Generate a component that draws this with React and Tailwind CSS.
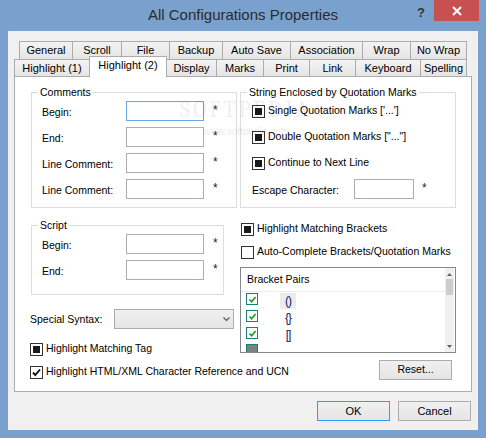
import React from 'react';

const row1 = [
  ['General', 53],
  ['Scroll', 49],
  ['File', 48],
  ['Backup', 53],
  ['Auto Save', 68],
  ['Association', 72],
  ['Wrap', 48],
  ['No Wrap', 57],
];

const row2 = [
  ['Highlight (1)', 75],
  ['Highlight (2)', 78, true],
  ['Display', 50],
  ['Marks', 47],
  ['Print', 46],
  ['Link', 46],
  ['Keyboard', 65],
  ['Spelling', 47],
];

function Tab({ label, w, last, active }) {
  if (active) {
    return (
      <div
        style={{ width: w }}
        className="relative z-10 -mr-px -mb-px h-[21px] shrink-0 border-x border-t border-[#acacac] bg-white pt-[2px] text-center leading-[12px]"
      >
        {label}
      </div>
    );
  }
  return (
    <div
      style={{ width: w }}
      className={`flex h-full shrink-0 items-center justify-center border-l border-t border-[#acacac] bg-gradient-to-b from-[#f3f3f3] to-[#e5e5e5] ${last ? 'border-r' : ''}`}
    >
      {label}
    </div>
  );
}

function Check({ state }) {
  return (
    <div className="flex h-[13px] w-[13px] shrink-0 items-center justify-center border border-[#333] bg-white">
      {state === 'mixed' && <div className="h-[7px] w-[7px] bg-[#1a1a1a]" />}
      {state === 'on' && (
        <svg width="11" height="11" viewBox="0 0 11 11">
          <path d="M2 5.5 L4.3 8 L9 2.5" fill="none" stroke="#111" strokeWidth="1.9" />
        </svg>
      )}
    </div>
  );
}

function Field({ w, focus }) {
  return (
    <div
      className={`h-[20px] shrink-0 border bg-white ${focus ? 'border-[#6aa8e8]' : 'border-[#abadb3]'}`}
      style={{ width: w }}
    />
  );
}

function Group({ title, className, children }) {
  return (
    <div className={`relative border border-[#dcdcdc] ${className}`}>
      <span className="absolute -top-[7px] left-[6px] bg-white px-[2px] leading-[12px]">{title}</span>
      {children}
    </div>
  );
}

function Star() {
  return <span className="text-[12px] leading-[12px] text-[#222]">*</span>;
}

function InputRow({ label, focus }) {
  return (
    <div className="flex h-[20px] items-center">
      <span className="w-[94px] shrink-0 whitespace-nowrap pl-[10px] pt-[3px]">{label}</span>
      <Field w={78} focus={focus} />
      <span className="ml-[9px]">
        <Star />
      </span>
    </div>
  );
}

function Button({ children, def, className }) {
  return (
    <div
      className={`flex h-[20px] w-[73px] items-center justify-center border bg-gradient-to-b from-[#f0f0f0] to-[#e5e5e5] ${def ? 'border-[#3399ff]' : 'border-[#acacac]'} ${className || ''}`}
    >
      {children}
    </div>
  );
}

function ListCheck() {
  return (
    <div className="flex h-[12px] w-[12px] items-center justify-center border border-[#17806f] bg-white">
      <svg width="9" height="9" viewBox="0 0 9 9">
        <path d="M1.5 4.5 L3.6 6.8 L7.6 2" fill="none" stroke="#1f9a2a" strokeWidth="1.7" />
      </svg>
    </div>
  );
}

export default function App() {
  return (
    <div
      className="relative h-[438px] w-[486px] overflow-hidden bg-[#7aa1cd] text-[10.5px] text-black"
      style={{ fontFamily: '"Liberation Sans", Arial, sans-serif' }}
    >
      {/* Title bar */}
      <div className="grid h-[31px] grid-cols-[1fr_auto_1fr]">
        <div />
        <div className="pt-[5px] text-[15px] leading-[20px] text-[#2b2b2b]">All Configurations Properties</div>
        <div className="flex items-start justify-end pr-[7px]">
          <span className="w-[26px] pt-[3px] text-center text-[13px] font-bold text-[#333]">?</span>
          <div className="flex h-[21px] w-[45px] items-center justify-center bg-[#c75050]">
            <svg width="10" height="10" viewBox="0 0 10 10">
              <path d="M1 1 L9 9 M9 1 L1 9" stroke="#fff" strokeWidth="2" />
            </svg>
          </div>
        </div>
      </div>

      {/* Dialog body */}
      <div className="mx-[8px] h-[399px] bg-[#f0f0f0] pt-[10px] text-[11px]">
        <div className="ml-[11px] flex h-[18px]">
          {row1.map(([l, w], i) => (
            <Tab key={l} label={l} w={w} last={i === row1.length - 1} />
          ))}
        </div>
        <div className="ml-[6px] flex h-[17px] items-end">
          {row2.map(([l, w, a], i) => (
            <Tab key={l} label={l} w={w} active={a} last={i === row2.length - 1} />
          ))}
        </div>

        {/* Tab page */}
        <div className="mx-[6px] flex h-[316px] gap-[3px] border border-[#acacac] bg-white pl-[16px] pt-[15px] text-[10.5px]">
          {/* left column */}
          <div className="flex w-[206px] flex-col">
            <Group title="Comments" className="w-[206px]">
              <div className="flex flex-col gap-[6px] py-[8px]">
                <InputRow label="Begin:" focus />
                <InputRow label="End:" />
                <InputRow label="Line Comment:" />
                <InputRow label="Line Comment:" />
              </div>
            </Group>

            <Group title="Script" className="mt-[17px] w-[193px]">
              <div className="flex flex-col gap-[6px] pb-[14px] pt-[8px]">
                <InputRow label="Begin:" />
                <InputRow label="End:" />
              </div>
            </Group>

            <div className="-ml-px mt-[14px] flex h-[20px] items-center">
              <span className="w-[84px] shrink-0 pt-[2px]">Special Syntax:</span>
              <div className="flex h-[20px] w-[120px] items-center justify-end border border-[#acacac] bg-gradient-to-b from-[#f0f0f0] to-[#e5e5e5] pr-[3px]">
                <svg width="7" height="5" viewBox="0 0 7 5">
                  <path d="M0.5 0.5 L3.5 3.5 L6.5 0.5" fill="none" stroke="#555" strokeWidth="1.2" />
                </svg>
              </div>
            </div>

            <div className="-ml-px mt-[12px] flex h-[16px] items-center gap-[3px]">
              <Check state="mixed" />
              <span>Highlight Matching Tag</span>
            </div>
            <div className="-ml-px mt-[7px] flex h-[16px] items-center gap-[3px] whitespace-nowrap">
              <Check state="on" />
              <span>Highlight HTML/XML Character Reference and UCN</span>
            </div>
          </div>

          {/* right column */}
          <div className="flex w-[216px] flex-col">
            <Group title="String Enclosed by Quotation Marks" className="w-[216px]">
              <div className="flex flex-col gap-[6px] py-[8px] pl-[11px]">
                <div className="flex h-[20px] items-center gap-[3px]">
                  <Check state="mixed" />
                  <span>Single Quotation Marks ['...']</span>
                </div>
                <div className="flex h-[20px] items-center gap-[3px]">
                  <Check state="mixed" />
                  <span>Double Quotation Marks ["..."]</span>
                </div>
                <div className="flex h-[20px] items-center gap-[3px]">
                  <Check state="mixed" />
                  <span>Continue to Next Line</span>
                </div>
                <div className="flex h-[20px] items-center">
                  <span className="w-[102px] shrink-0 pt-[3px]">Escape Character:</span>
                  <Field w={60} />
                  <span className="ml-[8px]">
                    <Star />
                  </span>
                </div>
              </div>
            </Group>

            <div className="ml-px mt-[13px] flex h-[16px] items-center gap-[3px] whitespace-nowrap">
              <Check state="mixed" />
              <span>Highlight Matching Brackets</span>
            </div>
            <div className="ml-px mt-[7px] flex h-[16px] items-center gap-[3px] whitespace-nowrap">
              <Check />
              <span>Auto-Complete Brackets/Quotation Marks</span>
            </div>

            {/* Bracket pairs list */}
            <div className="mt-[7px] flex h-[86px] w-[216px] border border-[#828790] bg-white">
              <div className="flex-1 overflow-hidden">
                <div className="flex h-[24px] items-center border-b border-[#e5edf5] pl-[6px]">Bracket Pairs</div>
                {['()', '{}', '[]', ''].map((b, i) => (
                  <div key={i} className="flex h-[17px] items-start pl-[5px] pt-px">
                    {i < 3 ? <ListCheck /> : <div className="h-[12px] w-[12px] border border-[#17806f] bg-[#808080]" />}
                    <span
                      className={`ml-[22px] flex h-[16px] w-[16px] items-center justify-center text-[12px] tracking-[-1px] text-[#0c1a66] ${i === 0 ? 'bg-[#ececec]' : ''}`}
                    >
                      {b}
                    </span>
                  </div>
                ))}
              </div>
              <div className="mr-px flex w-[9px] flex-col items-center bg-[#f0f0f0]">
                <svg width="7" height="7" viewBox="0 0 7 7" className="mt-[3px]">
                  <path d="M1 5 L3.5 2 L6 5 Z" fill="#606060" />
                </svg>
                <div className="mt-px h-[16px] w-[7px] bg-[#cdcdcd]" />
                <div className="flex-1" />
                <svg width="7" height="7" viewBox="0 0 7 7" className="mb-[2px]">
                  <path d="M1 2 L3.5 5 L6 2 Z" fill="#606060" />
                </svg>
              </div>
            </div>

            <Button className="ml-[139px] mt-[7px]">Reset...</Button>
          </div>
        </div>

        <div className="mt-[9px] flex justify-end gap-[8px] pr-[7px]">
          <Button def>OK</Button>
          <Button>Cancel</Button>
        </div>
      </div>

      {/* watermark */}
      <div className="pointer-events-none absolute left-[180px] top-[94px] font-serif text-[22px] tracking-[3px] text-[#000] opacity-[0.06]">
        SOFTPEDIA
      </div>
      <div className="pointer-events-none absolute left-[203px] top-[124px] text-[10px] text-[#000] opacity-[0.08]">
        www.softpedia.com
      </div>
    </div>
  );
}
